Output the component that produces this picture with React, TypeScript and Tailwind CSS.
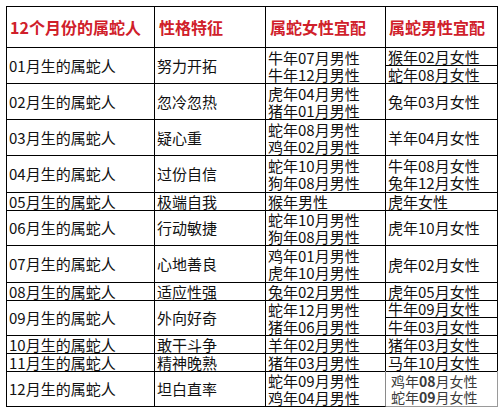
import React from "react";

type Row = {
  h: string;
  month: string;
  trait: string;
  female: string[];
  male: string[];
  maleSplit?: boolean;
};

const rows: Row[] = [
  { h: "h-[36px]", month: "01月生的属蛇人", trait: "努力开拓", female: ["牛年07月男性", "牛年12月男性"], male: ["猴年02月女性", "蛇年08月女性"], maleSplit: true },
  { h: "h-[36px]", month: "02月生的属蛇人", trait: "忽冷忽热", female: ["虎年04月男性", "猪年01月男性"], male: ["兔年03月女性"] },
  { h: "h-[36px]", month: "03月生的属蛇人", trait: "疑心重", female: ["蛇年08月男性", "鸡年02月男性"], male: ["羊年04月女性"] },
  { h: "h-[37px]", month: "04月生的属蛇人", trait: "过份自信", female: ["蛇年10月男性", "狗年08月男性"], male: ["牛年08月女性", "兔年12月女性"] },
  { h: "h-[17px]", month: "05月生的属蛇人", trait: "极端自我", female: ["猴年男性"], male: ["虎年女性"] },
  { h: "h-[36px]", month: "06月生的属蛇人", trait: "行动敏捷", female: ["蛇年10月男性", "狗年08月男性"], male: ["虎年10月女性"] },
  { h: "h-[37px]", month: "07月生的属蛇人", trait: "心地善良", female: ["鸡年01月男性", "虎年10月男性"], male: ["虎年02月女性"] },
  { h: "h-[17px]", month: "08月生的属蛇人", trait: "适应性强", female: ["兔年02月男性"], male: ["虎年05月女性"] },
  { h: "h-[36px]", month: "09月生的属蛇人", trait: "外向好奇", female: ["蛇年12月男性", "猪年06月男性"], male: ["牛年09月女性", "牛年03月女性"], maleSplit: true },
  { h: "h-[18px]", month: "10月生的属蛇人", trait: "敢干斗争", female: ["羊年02月男性"], male: ["猪年03月女性"] },
  { h: "h-[17px]", month: "11月生的属蛇人", trait: "精神晚熟", female: ["猪年03月男性"], male: ["马年10月女性"] },
];

const cols = "grid grid-cols-[148px_111px_120px_112px]";
const cell = "border-r border-b border-black flex flex-col justify-center pl-[2px]";

function Lines({ items }: { items: string[] }) {
  return (
    <>
      {items.map((t) => (
        <div key={t} className="leading-[17px] whitespace-nowrap">
          {t}
        </div>
      ))}
    </>
  );
}

export default function App() {
  return (
    <div
      className="w-[498px] h-[413px] bg-white pt-[6px] pl-[6px] text-[15px] text-[#111]"
      style={{ fontFamily: '"Noto Sans CJK SC", "Noto Sans", sans-serif' }}
    >
      <div className="w-[492px] border-l border-t border-black">
        <div className={`${cols} h-[41px] font-bold text-[16px] text-[#d0202a]`}>
          <div className={`${cell} pl-[3px]`}>12个月份的属蛇人</div>
          <div className={`${cell} pl-[4px]`}>性格特征</div>
          <div className={`${cell} pl-[4px]`}>属蛇女性宜配</div>
          <div className={`${cell} pl-[3px]`}>属蛇男性宜配</div>
        </div>
        {rows.map((r) => (
          <div key={r.month} className={`${cols} ${r.h}`}>
            <div className={`${cell} leading-[16px]`}>{r.month}</div>
            <div className={`${cell} leading-[16px]`}>{r.trait}</div>
            <div className={cell}>
              <Lines items={r.female} />
            </div>
            {r.maleSplit ? (
              <div className="border-r border-b border-black flex flex-col">
                <div className="h-[18px] border-b border-black pl-[2px] leading-[17px] whitespace-nowrap">
                  {r.male[0]}
                </div>
                <div className="h-[17px] pl-[2px] leading-[17px] whitespace-nowrap">{r.male[1]}</div>
              </div>
            ) : (
              <div className={cell}>
                <Lines items={r.male} />
              </div>
            )}
          </div>
        ))}
        <div className={`${cols} h-[36px]`}>
          <div className={`${cell} leading-[16px]`}>12月生的属蛇人</div>
          <div className={`${cell} leading-[16px]`}>坦白直率</div>
          <div className={`${cell} border-r-[#8a8a8a]`}>
            <Lines items={["蛇年09月男性", "鸡年04月男性"]} />
          </div>
          <div className="border-r border-b border-[#9a9a9a] flex flex-col justify-center pl-[5px] text-[14px] text-[#3a3a3a]">
            <div className="leading-[16px] whitespace-nowrap">
              鸡年<span className="font-bold">08</span>月女性
            </div>
            <div className="leading-[16px] whitespace-nowrap">
              蛇年<span className="font-bold">09</span>月女性
            </div>
          </div>
        </div>
      </div>
    </div>
  );
}
